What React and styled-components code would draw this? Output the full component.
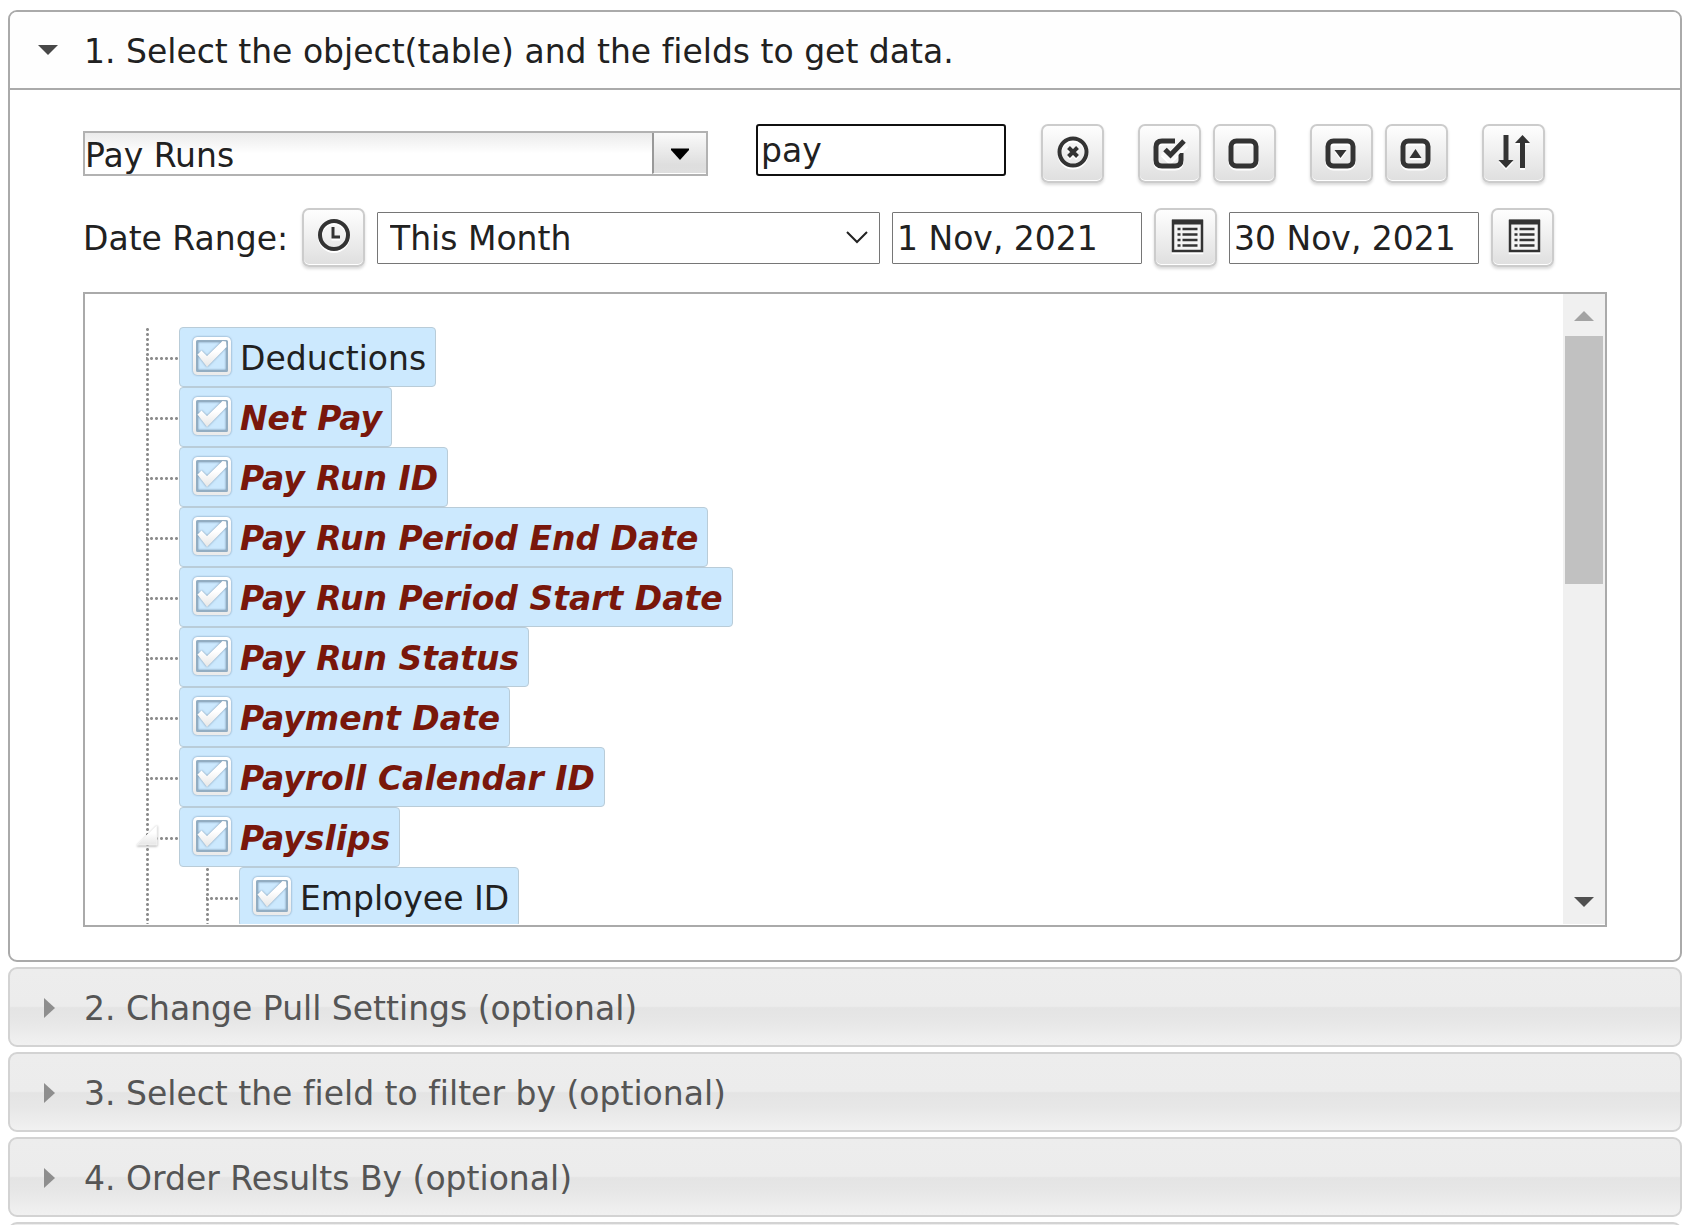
import React, { useState } from "react";
import styled, { createGlobalStyle, css } from "styled-components";

const GlobalStyle = createGlobalStyle`
  *, *::before, *::after { box-sizing: border-box; }
  body {
    margin: 0;
    background: #fff;
    color: #212121;
    font: 33px/40px Verdana, "DejaVu Sans", sans-serif;
    font-variant-ligatures: none;
  }
  button, input, select { font: inherit; color: inherit; margin: 0; }
`;

const Page = styled.main`
  display: flex;
  flex-direction: column;
  gap: 5px;
  height: 100vh;
  padding: 10px 7px 0 8px;
  overflow: hidden;
`;

const Panel = styled.section`
  flex: none;
  border: 2px solid #aaa;
  border-radius: 9px;
  background: #fff;
`;

const headerLayout = css`
  display: flex;
  align-items: center;
  gap: 20px;
  width: 100%;
  padding: 0 22px;
  font-variant-ligatures: none;
  text-align: left;
  white-space: nowrap;
`;

const OpenHeader = styled.button`
  ${headerLayout}
  height: 78px;
  border: 0;
  border-bottom: 2px solid #aaa;
  border-radius: 7px 7px 0 0;
  background: #fefefe;
`;

const ClosedHeader = styled.button`
  ${headerLayout}
  flex: none;
  height: 80px;
  border: 2px solid #d3d3d3;
  border-radius: 9px;
  background: linear-gradient(#ededed, #ececec 49%, #e4e4e4 51%, #e7e7e7 70%, #f1f1f1);
  color: #555;
`;

const HeaderIcon = styled.svg`
  flex: none;
  width: 32px;
  height: 32px;
`;

const Caption = styled.span`
  padding-top: 4px;
`;

const PanelBody = styled.div`
  display: flex;
  flex-direction: column;
  gap: 25px;
  padding: 34px 73px 33px;
`;

const Controls = styled.div`
  display: flex;
  align-items: center;
  gap: ${(p) => p.$gap || 0}px;
  height: 59px;
`;

const Combo = styled.div`
  display: flex;
  width: 625px;
  height: 45px;
  border: 2px solid #b2b2b2;
  background: linear-gradient(#ebebeb, #fff 50%);
`;

const ComboInput = styled.input`
  flex: 1;
  min-width: 0;
  padding: 4px 0 0;
  border: 0;
  background: transparent;
`;

const ComboButton = styled.button`
  display: grid;
  place-items: center;
  width: 54px;
  padding: 2px 0 0;
  border: 0;
  border-left: 2px solid #999;
  border-bottom: 1px solid #fff;
  background: linear-gradient(#fafafa, #dedede 80%, #dfdfdf);
`;

const TextField = styled.input`
  width: 250px;
  height: 52px;
  padding: 2px 4px 0;
  border: 1px solid #767676;
  border-radius: 1px;
  background: #fff;
`;

const FilterField = styled(TextField)`
  align-self: flex-start;
  margin-left: 48px;
  padding: 0 3px;
  border: 2px solid #101010;
  border-radius: 3px;
  outline: none;
`;

const ButtonGroups = styled.div`
  display: flex;
  gap: 34px;
  margin-left: 35px;
`;

const ButtonGroup = styled.div`
  display: flex;
  gap: 12px;
`;

const IconButton = styled.button`
  flex: none;
  display: grid;
  place-items: center;
  width: 63px;
  height: 59px;
  padding: 0 0 6px;
  border: 2px solid #ccc;
  border-radius: 7px;
  background: linear-gradient(#fefefe, #dfdfdf);
  box-shadow: inset 0 -1px 0 #fff, 0 2px 3px rgba(0, 0, 0, 0.15);
  color: #333;

  svg {
    width: 36px;
    height: 40px;
    filter: drop-shadow(0 2px 0 #fff);
  }
`;

const RangeLabel = styled.label`
  width: 207px;
  padding-top: 2px;
  white-space: nowrap;
`;

const SelectBox = styled.div`
  display: grid;
  align-items: center;
  width: 503px;

  > * { grid-area: 1 / 1; }
  svg { justify-self: end; margin-right: 12px; pointer-events: none; }
`;

const Select = styled.select`
  appearance: none;
  width: 100%;
  height: 52px;
  padding: 2px 12px 0;
  border: 1px solid #767676;
  border-radius: 1px;
  background: #fff;
`;

const TreeBox = styled.div`
  display: flex;
  height: 635px;
  border: 2px solid #aaa;
  padding-bottom: 1px;
`;

const TreeScroll = styled.div`
  flex: 1;
  min-width: 0;
  padding: 33px 0 0 61px;
  overflow: hidden;
`;

const TreeList = styled.ul`
  margin: 0;
  padding: 0;
  list-style: none;
`;

const SubList = styled(TreeList)`
  padding-left: 60px;
`;

const dot = "radial-gradient(circle at 50% 50%, #8c8c8c 1px, transparent 2px)";

const TreeItem = styled.li`
  background: ${dot} 0 0 / 3px 5px repeat-y;
`;

const TreeRow = styled.div`
  position: relative;
  display: flex;
  height: 60px;
`;

const Branch = styled.span`
  flex: none;
  width: 33px;
  background: ${dot} 3px 30px / 5px 3px repeat-x;
`;

const Expander = styled.button`
  position: absolute;
  left: -13px;
  top: 14px;
  width: 28px;
  height: 28px;
  padding: 0;
  border: 0;
  background: none;

  svg {
    display: block;
    filter: drop-shadow(0 1px 1px rgba(0, 0, 0, 0.3));
  }
`;

const TreeLabel = styled.label`
  display: flex;
  align-items: center;
  gap: 8px;
  padding: 0 9px 0 12px;
  border: 1px solid #b9ccd8;
  border-radius: 4px;
  background: #cce9fe;
  white-space: nowrap;
  ${(p) =>
    p.$match &&
    css`
      color: #79170b;
      font-weight: bold;
      font-style: italic;
    `}
`;

const CheckBox = styled.span`
  display: grid;
  width: 40px;
  height: 42px;

  > * { grid-area: 1 / 1; }
  input { width: 100%; height: 100%; opacity: 0; }
  svg { filter: drop-shadow(0 0 1px rgba(60, 90, 120, 0.6)); }
`;

const ScrollBar = styled.div`
  display: flex;
  flex-direction: column;
  align-items: center;
  width: 42px;
  background: #f0f0f0;
`;

const ScrollArrow = styled.svg`
  width: 42px;
  height: 42px;
`;

const ScrollTrack = styled.div`
  flex: 1;
`;

const ScrollThumb = styled.div`
  width: 38px;
  height: 248px;
  background: #c1c1c1;
`;

const CheckMark = ({ checked }) => (
  <svg width="40" height="40" viewBox="0 0 40 40" aria-hidden="true">
    <rect x="5" y="5" width="30" height="30" fill="none" stroke="#92adc2" strokeWidth="2" />
    <rect x="2.5" y="2.5" width="35" height="35" rx="3" fill="none" stroke="url(#frameFill)" strokeWidth="3" />
    {checked && (
      <path d="M5.5 18.500L9.500 14.500L15 20L30.500 5L34 5.500L34.500 11L15 31Z" fill="url(#markFill)" />
    )}
  </svg>
);

const Gradients = () => (
  <svg width="0" height="0" style={{ position: "absolute" }} aria-hidden="true">
    <defs>
      <linearGradient id="frameFill" x1="0" y1="0" x2="0" y2="1">
        <stop offset="0" stopColor="#fff" />
        <stop offset="1" stopColor="#ebebeb" />
      </linearGradient>
      <linearGradient id="markFill" x1="0" y1="0" x2="0" y2="1">
        <stop offset="0.4" stopColor="#fff" />
        <stop offset="1" stopColor="#e6e6e6" />
      </linearGradient>
    </defs>
  </svg>
);

const Box = () => (
  <rect x="4" y="10" width="25" height="25" rx="5.500" fill="none" stroke="currentColor" strokeWidth="5" />
);

const icons = {
  clear: (
    <>
      <circle cx="18" cy="21" r="13.500" fill="none" stroke="currentColor" strokeWidth="4" />
      <path d="M13.500 16.500L22.500 25.500M22.500 16.500L13.500 25.500" stroke="currentColor" strokeWidth="4" />
    </>
  ),
  checkAll: (
    <>
      <path d="M23 10H10Q4 10 4 16V29Q4 35 10 35H23Q29 35 29 29V22" fill="none" stroke="currentColor" strokeWidth="5" />
      <path d="M12 20L18 26L33 11" fill="none" stroke="#f8f8f8" strokeWidth="9" />
      <path d="M13 18.500L18.500 24L32 10" fill="none" stroke="currentColor" strokeWidth="5" />
    </>
  ),
  uncheckAll: <Box />,
  expandAll: (
    <>
      <Box />
      <path d="M10.500 19H22.500L16.500 27Z" fill="currentColor" />
    </>
  ),
  collapseAll: (
    <>
      <Box />
      <path d="M10.500 27H22.500L16.500 18Z" fill="currentColor" />
    </>
  ),
  sort: (
    <>
      <path d="M7.500 4H12.500V29H17.500L10 37L2.500 29H7.500Z" fill="currentColor" />
      <path d="M24 37H29V12H34L26.500 4L19 12H24Z" fill="currentColor" />
    </>
  ),
  clock: (
    <>
      <circle cx="18" cy="20" r="14" fill="none" stroke="currentColor" strokeWidth="4" />
      <path d="M17 12V22H24" fill="none" stroke="currentColor" strokeWidth="3" />
    </>
  ),
  list: (
    <>
      <path d="M5 6H34V36H5Z" fill="#f4f4f4" stroke="currentColor" strokeWidth="2.500" />
      <path d="M4 4.500H35V9.500H4Z" fill="currentColor" />
      <path
        d="M9.500 14H12.500M9.500 19.500H12.500M9.500 25H12.500M9.500 30.500H12.500M14.500 14H29.500M14.500 19.500H29.500M14.500 25H29.500M14.500 30.500H29.500"
        stroke="currentColor"
        strokeWidth="2.600"
      />
    </>
  ),
};

const Tool = ({ icon, label }) => (
  <IconButton type="button" aria-label={label} title={label}>
    <svg viewBox="0 0 36 40" aria-hidden="true">{icons[icon]}</svg>
  </IconButton>
);

const toolGroups = [
  [["clear", "Clear filter"]],
  [["checkAll", "Check all"], ["uncheckAll", "Uncheck all"]],
  [["expandAll", "Expand all"], ["collapseAll", "Collapse all"]],
  [["sort", "Sort fields"]],
];

const fields = [
  { name: "Deductions" },
  { name: "Net Pay" },
  { name: "Pay Run ID" },
  { name: "Pay Run Period End Date" },
  { name: "Pay Run Period Start Date" },
  { name: "Pay Run Status" },
  { name: "Payment Date" },
  { name: "Payroll Calendar ID" },
  { name: "Payslips", children: [{ name: "Employee ID" }] },
];

function Field({ field, filter }) {
  const [checked, setChecked] = useState(true);
  const [open, setOpen] = useState(true);
  const match = filter !== "" && field.name.toLowerCase().includes(filter.toLowerCase());
  return (
    <TreeItem>
      <TreeRow>
        <Branch />
        {field.children && (
          <Expander type="button" aria-label="Toggle" aria-expanded={open} onClick={() => setOpen(!open)}>
            <svg width="28" height="28" viewBox="0 0 28 28" aria-hidden="true">
              <path d="M4 24L24 4V24Z" fill="url(#markFill)" stroke="#f2f2f2" strokeWidth="1" strokeLinejoin="round" />
            </svg>
          </Expander>
        )}
        <TreeLabel $match={match}>
          <CheckBox>
            <CheckMark checked={checked} />
            <input type="checkbox" checked={checked} onChange={() => setChecked(!checked)} />
          </CheckBox>
          <Caption>{field.name}</Caption>
        </TreeLabel>
      </TreeRow>
      {field.children && open && (
        <SubList>
          {field.children.map((child) => (
            <Field key={child.name} field={child} filter={filter} />
          ))}
        </SubList>
      )}
    </TreeItem>
  );
}

const closedSections = [
  "2. Change Pull Settings (optional)",
  "3. Select the field to filter by (optional)",
  "4. Order Results By (optional)",
  "",
];

export default function App() {
  const [filter, setFilter] = useState("pay");
  return (
    <Page>
      <GlobalStyle />
      <Gradients />
      <Panel>
        <OpenHeader type="button" aria-expanded="true">
          <HeaderIcon viewBox="0 0 32 32" aria-hidden="true">
            <path d="M6 11H26L16 21Z" fill="#484848" />
          </HeaderIcon>
          <Caption>1. Select the object(table) and the fields to get data.</Caption>
        </OpenHeader>
        <PanelBody>
          <Controls>
            <Combo>
              <ComboInput aria-label="Object" defaultValue="Pay Runs" />
              <ComboButton type="button" aria-label="Show objects">
                <svg width="18" height="12" viewBox="0 0 18 12" aria-hidden="true">
                  <path d="M0 0.500H18V2L9 12L0 2Z" fill="#000" />
                </svg>
              </ComboButton>
            </Combo>
            <FilterField aria-label="Filter fields" value={filter} onChange={(e) => setFilter(e.target.value)} />
            <ButtonGroups>
              {toolGroups.map((group) => (
                <ButtonGroup key={group[0][0]}>
                  {group.map(([icon, label]) => (
                    <Tool key={icon} icon={icon} label={label} />
                  ))}
                </ButtonGroup>
              ))}
            </ButtonGroups>
          </Controls>
          <Controls $gap={12}>
            <RangeLabel htmlFor="range">Date Range:</RangeLabel>
            <Tool icon="clock" label="Current period" />
            <SelectBox>
              <Select id="range" defaultValue="This Month">
                <option>This Month</option>
              </Select>
              <svg width="22" height="13" viewBox="0 0 22 13" aria-hidden="true">
                <path d="M1 1L11 11L21 1" fill="none" stroke="#222" strokeWidth="2" />
              </svg>
            </SelectBox>
            <TextField aria-label="Start date" defaultValue="1 Nov, 2021" />
            <Tool icon="list" label="Pick start date" />
            <TextField aria-label="End date" defaultValue="30 Nov, 2021" />
            <Tool icon="list" label="Pick end date" />
          </Controls>
          <TreeBox>
            <TreeScroll>
              <TreeList>
                {fields.map((field) => (
                  <Field key={field.name} field={field} filter={filter} />
                ))}
              </TreeList>
            </TreeScroll>
            <ScrollBar aria-hidden="true">
              <ScrollArrow viewBox="0 0 42 42">
                <path d="M11 27L21 17L31 27Z" fill="#a3a3a3" />
              </ScrollArrow>
              <ScrollTrack>
                <ScrollThumb />
              </ScrollTrack>
              <ScrollArrow viewBox="0 0 42 42">
                <path d="M11 15H31L21 25Z" fill="#505050" />
              </ScrollArrow>
            </ScrollBar>
          </TreeBox>
        </PanelBody>
      </Panel>
      {closedSections.map((title) => (
        <ClosedHeader key={title} type="button" aria-expanded="false">
          <HeaderIcon viewBox="0 0 32 32" aria-hidden="true">
            <path d="M12 7L23 17L12 27Z" fill="#8e8e8e" />
          </HeaderIcon>
          <Caption>{title}</Caption>
        </ClosedHeader>
      ))}
    </Page>
  );
}
